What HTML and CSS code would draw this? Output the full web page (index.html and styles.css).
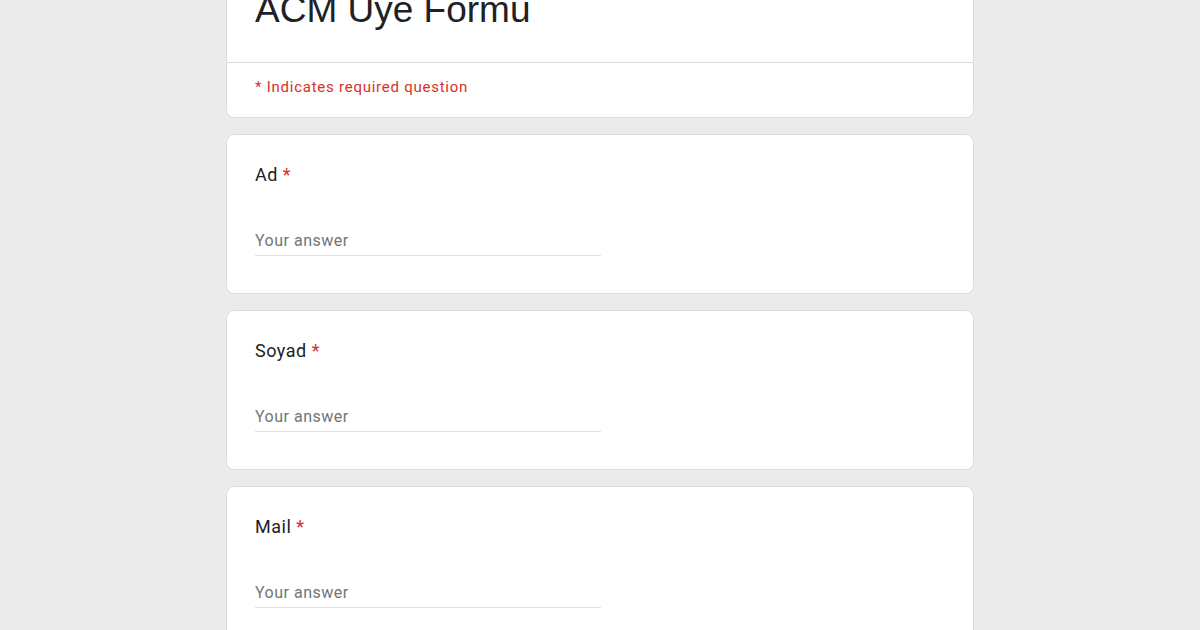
FILE: index.html
```html
<!DOCTYPE html>
<html lang="tr">
<head>
<meta charset="utf-8">
<title>ACM Üye Formu</title>
<link rel="stylesheet" href="styles.css">
</head>
<body>
<main class="form">
  <section class="card header-card">
    <div class="title-area">
      <h1 class="form-title">ACM Üye Formu</h1>
    </div>
    <div class="required-note">* Indicates required question</div>
  </section>

  <section class="card question">
    <div class="q-title">Ad <span class="req">*</span></div>
    <div class="answer"><span class="placeholder">Your answer</span></div>
  </section>

  <section class="card question">
    <div class="q-title">Soyad <span class="req">*</span></div>
    <div class="answer"><span class="placeholder">Your answer</span></div>
  </section>

  <section class="card question">
    <div class="q-title">Mail <span class="req">*</span></div>
    <div class="answer"><span class="placeholder">Your answer</span></div>
  </section>
</main>
</body>
</html>
```

FILE: styles.css
```css
* { box-sizing: border-box; }
html, body { margin: 0; padding: 0; }
body {
  background: #ebebeb;
  font-family: Roboto, "Liberation Sans", Arial, sans-serif;
  color: #202124;
  overflow: hidden;
  height: 630px;
}
.form {
  width: 748px;
  margin: -37px auto 0;
  display: flex;
  flex-direction: column;
  gap: 16px;
}
.card {
  background: #fff;
  border: 1px solid #dadce0;
  border-radius: 8px;
}
.title-area {
  padding: 22px 28px 28px;
  border-bottom: 1px solid #dadce0;
}
.form-title {
  margin: 0;
  font-family: "Liberation Sans", Arial, sans-serif;
  font-weight: 400;
  font-size: 37px;
  line-height: 48px;
  color: #202124;
}
.required-note {
  padding: 14px 28px 20px;
  color: #d93025;
  font-size: 15px;
  line-height: 20px;
  letter-spacing: 0.75px;
}
.question {
  height: 160px;
  padding: 28px 28px 0;
}
.q-title {
  font-size: 18px;
  line-height: 24px;
  letter-spacing: 0.5px;
}
.req { color: #d93025; }
.answer {
  margin-top: 42px;
  width: 346px;
  border-bottom: 1px solid #e0e0e0;
  padding-bottom: 2px;
}
.placeholder {
  display: block;
  font-size: 16px;
  line-height: 24px;
  color: #70757a;
  letter-spacing: 0.5px;
}
```
